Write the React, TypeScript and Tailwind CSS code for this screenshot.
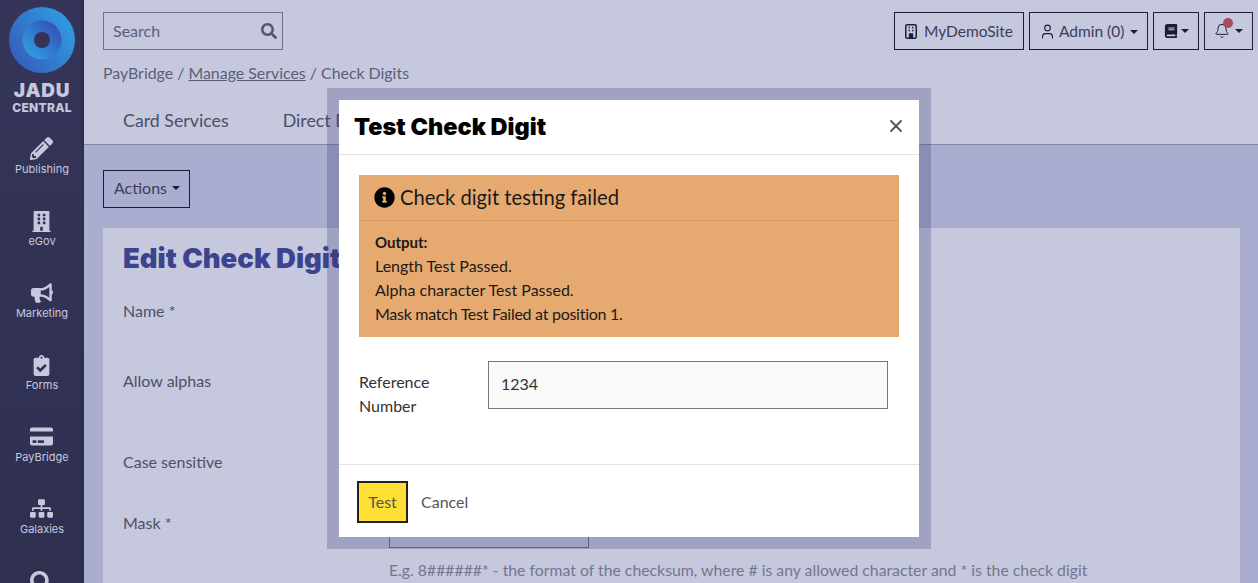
import { FaBook, FaBuilding, FaBullhorn, FaClipboardCheck, FaCreditCard, FaInfoCircle, FaPencilAlt, FaSearch, FaSitemap } from 'react-icons/fa';
import { Bell, User, X } from 'lucide-react';

const navItems = [
    { label: 'Publishing', icon: FaPencilAlt, size: 'text-[23px]' },
    { label: 'eGov', icon: FaBuilding, size: 'text-[21px]' },
    { label: 'Marketing', icon: FaBullhorn, size: 'text-[22px]' },
    { label: 'Forms', icon: FaClipboardCheck, size: 'text-[21px]' },
    { label: 'PayBridge', icon: FaCreditCard, size: 'text-[23px]' },
    { label: 'Galaxies', icon: FaSitemap, size: 'text-[23px]' },
];

function Caret() {
    return <span className="inline-block w-0 h-0 border-x-[4px] border-x-transparent border-t-[4px] border-t-[#1c1c38]"></span>;
}

function SiteIcon() {
    return (
        <svg width="12" height="15" viewBox="0 0 12 15" fill="none" stroke="#1c1c38">
            <rect x="0.75" y="0.75" width="10.5" height="13.5" rx="1.5" strokeWidth="1.5" />
            <path d="M3.5 3.5h1.5M7 3.5h1.5M3.5 6.5h1.5M7 6.5h1.5" strokeWidth="1.6" />
            <path d="M4.5 14v-4h3v4" strokeWidth="1.4" fill="#1c1c38" />
        </svg>
    );
}

function Logo() {
    return (
        <svg width="66" height="66" viewBox="0 0 66 66">
            <defs>
                <linearGradient id="outer" x1="0" y1="0.9" x2="1" y2="0.2">
                    <stop offset="0" stopColor="#3658b8" />
                    <stop offset="1" stopColor="#2f9fe2" />
                </linearGradient>
                <linearGradient id="inner" x1="0.1" y1="0.9" x2="0.9" y2="0.1">
                    <stop offset="0" stopColor="#2f9fe2" />
                    <stop offset="1" stopColor="#3550b8" />
                </linearGradient>
            </defs>
            <circle cx="33" cy="33" r="33" fill="url(#outer)" />
            <circle cx="33" cy="33" r="19.5" fill="url(#inner)" />
            <circle cx="33" cy="33" r="8" fill="#333358" />
        </svg>
    );
}

export default function App() {
    return (
        <div className="relative flex w-[1258px] h-[583px] overflow-hidden bg-[#aaadcf] text-[#5c5e78] text-[16px] font-['Lato','Liberation_Sans',sans-serif]">
            {/* Sidebar */}
            <aside className="w-[84px] shrink-0 flex flex-col items-center pl-[3px] bg-gradient-to-b from-[#353559] to-[#2f2f50] border-r-[3px] border-[#2e2e4e] font-['Inter',sans-serif] text-[#c6c8de]">
                <div className="mt-[7px]">
                    <Logo />
                </div>
                <div className="mt-[8px] text-[19px] leading-[20px] font-black tracking-[0.8px]">JADU</div>
                <div className="text-[12px] leading-[14px] font-extrabold tracking-[0.3px]">CENTRAL</div>
                <nav className="mt-[16px] flex flex-col items-center gap-[27px]">
                    {navItems.map(item => (
                        <div key={item.label} className="flex flex-col items-center h-[45px] justify-end">
                            <item.icon className={item.size} />
                            <span className="mt-[2px] text-[11px] leading-[14px]">{item.label}</span>
                        </div>
                    ))}
                    <FaSearch className="mt-[8px] text-[23px]" />
                </nav>
            </aside>

            {/* Main */}
            <main className="flex-1 min-w-0">
                <header className="h-[145px] bg-[#c6c8de] border-b border-[#85879f] pl-[19px] pr-[5px] pt-[12px]">
                    <div className="flex items-start justify-between">
                        <div className="flex items-center justify-between w-[180px] h-[38px] border border-[#6e7088] pl-[9px] pr-[5px]">
                            <span>Search</span>
                            <FaSearch className="text-[16px] text-[#55576e]" />
                        </div>
                        <div className="flex gap-[5px] text-[#3c3c58] text-[15.5px]">
                            <button className="flex items-center gap-[7px] h-[38px] w-[130px] pl-[10px] pt-[1px] border border-[#1c1c38]">
                                <SiteIcon />
                                MyDemoSite
                            </button>
                            <button className="flex items-center gap-[3px] h-[38px] w-[119px] pl-[9px] pt-[1px] border border-[#1c1c38]">
                                <User size={17} strokeWidth={1.5} className="text-[#1c1c38]" />
                                Admin (0)
                                <span className="ml-[3px] flex"><Caret /></span>
                            </button>
                            <button className="flex items-center gap-[3px] h-[38px] w-[46px] pl-[10px] border border-[#1c1c38]">
                                <FaBook className="text-[#1c1c38] text-[14px]" />
                                <Caret />
                            </button>
                            <button className="relative flex items-center gap-[5px] h-[38px] w-[49px] pl-[9px] border border-[#1c1c38]">
                                <Bell size={16} strokeWidth={1.5} className="text-[#1c1c38]" />
                                <Caret />
                                <span className="absolute left-[18px] top-[5px] w-[10px] h-[10px] rounded-full bg-[#a64a5e]"></span>
                            </button>
                        </div>
                    </div>
                    <div className="mt-[14px] text-[15.9px] leading-[18px]">
                        PayBridge / <span className="underline">Manage Services</span> / Check Digits
                    </div>
                    <div className="mt-[27px] ml-[20px] flex gap-[54px] text-[17.8px] leading-[22px] text-[#4c4e68]">
                        <span>Card Services</span>
                        <span>Direct Debits</span>
                    </div>
                </header>

                <section className="pt-[25px] pl-[19px] pr-[18px]">
                    <button className="flex items-center gap-[5px] h-[38px] w-[87px] pl-[10px] pb-[2px] border border-[#1c1c38] text-[#3c3c58]">
                        Actions
                        <Caret />
                    </button>
                    <div className="mt-[20px] h-[400px] bg-[#c6c8de] pl-[20px] pt-[12px]">
                        <h1 className="text-[27.5px] leading-[36px] font-black text-[#3d438f] font-['Inter',sans-serif] whitespace-nowrap">Edit Check Digit</h1>
                        <div className="mt-[26px] leading-[18px] text-[#4e5068]">
                            <div className="h-[70px]">Name <span>*</span></div>
                            <div className="h-[81px]">Allow alphas</div>
                            <div className="h-[61px]">Case sensitive</div>
                            <div className="relative h-[47px]">
                                Mask <span>*</span>
                                <div className="absolute left-[266px] top-[-20px] w-[200px] h-[54px] border border-[#6e7088]"></div>
                            </div>
                        </div>
                        <p className="ml-[266px] leading-[18px] text-[15.8px] text-[#74768e]">
                            E.g. 8######* - the format of the checksum, where # is any allowed character and * is the check digit
                        </p>
                    </div>
                </section>
            </main>

            {/* Modal */}
            <div className="absolute left-[327px] top-[88px] w-[604px] h-[461px] border-[12px] border-[#2e2e6e]/25 bg-clip-padding bg-white text-[#333]">
                <div className="flex items-center justify-between h-[55px] pl-[15px] pr-[13px] pb-[3px] border-b border-[#e2e2e6]">
                    <h2 className="mt-[3px] text-[23.5px] font-black text-black font-['Inter',sans-serif]">Test Check Digit</h2>
                    <X size={20} strokeWidth={2.25} className="text-[#555]" />
                </div>
                <div className="px-[20px] pt-[20px]">
                    <div className="h-[162px] bg-[#e6a96f] text-[#1a1a1a]">
                        <div className="flex items-center gap-[5px] h-[46px] px-[15px] border-b border-[#d69a62] text-[20.2px]">
                            <FaInfoCircle className="text-[21px] text-black" />
                            Check digit testing failed
                        </div>
                        <div className="px-[16px] pt-[9px] leading-[24px]">
                            <div className="font-bold text-[15px]">Output:</div>
                            <div>Length Test Passed.</div>
                            <div>Alpha character Test Passed.</div>
                            <div className="tracking-[-0.27px]">Mask match Test Failed at position 1.</div>
                        </div>
                    </div>
                    <div className="flex mt-[24px]">
                        <label className="w-[129px] pt-[9px] leading-[24px]">Reference<br />Number</label>
                        <div className="flex items-center w-[400px] h-[48px] pl-[12px] pb-[3px] border border-[#777] bg-[#f9f9f9]">1234</div>
                    </div>
                </div>
                <div className="mt-[46px] flex items-start gap-[13px] h-[72px] pt-[16px] pl-[18px] border-t border-[#e2e2e6]">
                    <button className="w-[51px] h-[42px] border-[2px] border-[#222] bg-[#ffdf33] text-[#555]">Test</button>
                    <span className="mt-[9px] text-[#555]">Cancel</span>
                </div>
            </div>
        </div>
    );
}
